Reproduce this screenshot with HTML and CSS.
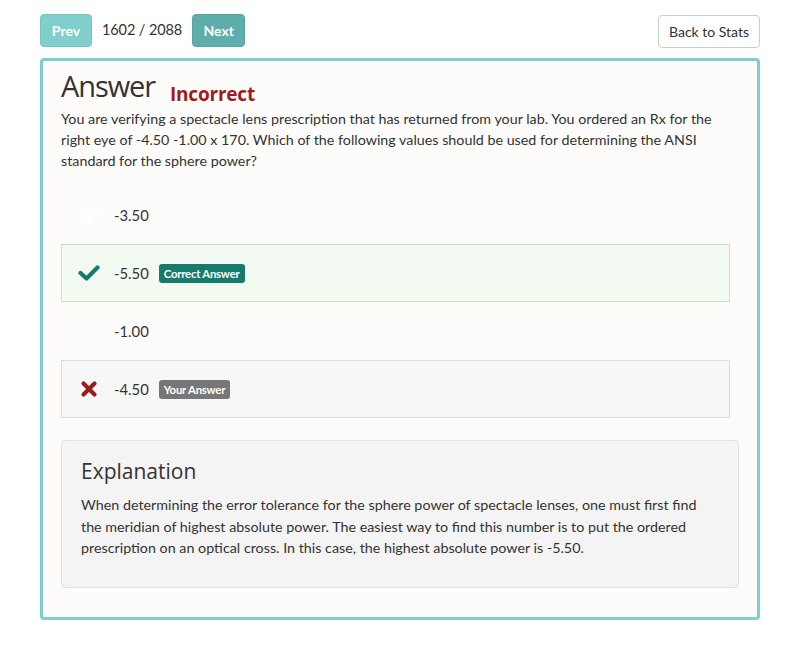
FILE: index.html
```html
<!DOCTYPE html>
<html>
<head>
<meta charset="utf-8">
<link rel="stylesheet" href="styles.css">
</head>
<body>
<div class="page">
  <div class="toolbar">
    <div class="nav">
      <button class="btn btn-prev">Prev</button>
      <span class="counter">1602 / 2088</span>
      <button class="btn btn-next">Next</button>
    </div>
    <button class="btn btn-back">Back to Stats</button>
  </div>
  <div class="card">
    <div class="title-row">
      <h1 class="title">Answer</h1>
      <span class="status">Incorrect</span>
    </div>
    <p class="question">You are verifying a spectacle lens prescription that has returned from your lab. You ordered an Rx for the right eye of -4.50 -1.00 x 170. Which of the following values should be used for determining the ANSI standard for the sphere power?</p>
    <div class="options">
      <div class="option">
        <span class="icon icon-hidden"><svg viewBox="0 0 22 18" width="22" height="18"><path d="M2.5 9 L8.5 14.5 L19.5 3.5" fill="none" stroke="#ffffff" stroke-width="4.2" stroke-linecap="round" stroke-linejoin="round"/></svg></span>
        <span class="value">-3.50</span>
      </div>
      <div class="option option-correct">
        <span class="icon"><svg viewBox="0 0 22 18" width="22" height="18"><path d="M2.5 9 L8.5 14.5 L19.5 3.5" fill="none" stroke="#167a6c" stroke-width="4.2" stroke-linecap="round" stroke-linejoin="round"/></svg></span>
        <span class="value">-5.50</span>
        <span class="badge badge-correct">Correct Answer</span>
      </div>
      <div class="option">
        <span class="icon"></span>
        <span class="value">-1.00</span>
      </div>
      <div class="option option-wrong">
        <span class="icon"><svg viewBox="0 0 18 18" width="18" height="18"><path d="M3.5 3.5 L14.5 14.5 M14.5 3.5 L3.5 14.5" fill="none" stroke="#9b1c1c" stroke-width="4.2" stroke-linecap="round"/></svg></span>
        <span class="value">-4.50</span>
        <span class="badge badge-yours">Your Answer</span>
      </div>
    </div>
    <div class="well">
      <h2 class="well-title">Explanation</h2>
      <p class="well-text">When determining the error tolerance for the sphere power of spectacle lenses, one must first find the meridian of highest absolute power. The easiest way to find this number is to put the ordered prescription on an optical cross. In this case, the highest absolute power is -5.50.</p>
    </div>
  </div>
</div>
</body>
</html>
```

FILE: styles.css
```css
* { box-sizing: border-box; }
html, body { margin: 0; padding: 0; background: #ffffff; }
body {
  font-family: Lato, "Open Sans", sans-serif;
  color: #333333;
  font-size: 14.3px;
}
.page {
  padding: 14px 40px 0 40px;
  width: 800px;
}
.toolbar {
  display: flex;
  justify-content: space-between;
  align-items: flex-start;
  height: 44px;
}
.nav {
  display: flex;
  align-items: center;
}
.btn {
  font-family: Lato, sans-serif;
  font-size: 14px;
  border-radius: 4px;
  height: 33px;
  padding: 0 12px;
  cursor: pointer;
}
.btn-prev {
  background: #80cfcd;
  border: 1px solid #74c4c2;
  color: #ffffff;
  font-weight: 700;
  width: 52px;
  padding: 0;
}
.btn-next {
  background: #5eaeab;
  border: 1px solid #55a4a1;
  color: #ffffff;
  font-weight: 700;
  width: 53px;
  padding: 0;
}
.counter {
  margin: 0 10px 0 10px;
  font-size: 14.5px;
  color: #333;
  position: relative;
  top: -1px;
  letter-spacing: -0.1px;
}
.btn-back {
  background: #ffffff;
  border: 1px solid #cccccc;
  color: #333333;
  width: 102px;
  padding: 0;
  height: 33px;
  margin-top: 1px;
}
.card {
  border: 3px solid #7dcfcf;
  border-radius: 4px;
  background: #fdfcfb;
  padding: 5px 18px 31px 18px;
  height: 562px;
}
.title-row {
  display: flex;
  align-items: baseline;
}
.title {
  font-family: "Open Sans", sans-serif;
  font-weight: 400;
  font-size: 29px;
  margin: 0;
  color: #333;
  letter-spacing: -1.1px;
  line-height: 40px;
}
.status {
  font-family: "Open Sans", sans-serif;
  font-weight: 700;
  color: #a11b1b;
  font-size: 19px;
  margin-left: 15px;
  position: relative;
  top: 4px;
  letter-spacing: -0.2px;
}
.question {
  margin: 2px 0 0 0;
  line-height: 21px;
  font-size: 14.3px;
  color: #333;
}
.options {
  margin-top: 15px;
  margin-right: 9px;
}
.option {
  display: flex;
  align-items: center;
  height: 58px;
  padding-left: 16px;
  border: 1px solid transparent;
}
.option-correct {
  background: #f3faf1;
  border-color: #c4e5bd;
}
.option-wrong {
  background: #f7f7f7;
  border-color: #dddddd;
}
.icon {
  width: 22px;
  height: 18px;
  display: inline-flex;
  align-items: center;
  justify-content: center;
  margin-right: 14px;
}
.value {
  font-size: 14.8px;
  color: #333;
}
.badge {
  margin-left: 10px;
  font-size: 11.3px;
  font-weight: 700;
  color: #fff;
  border-radius: 3px;
  padding: 3px 5px 3px 5px;
  letter-spacing: -0.2px;
  line-height: 13px;
}
.badge-correct { background: #167a6c; }
.badge-yours { background: #777777; }
.well {
  margin-top: 22px;
  background: #f4f4f4;
  border: 1px solid #e3e3e3;
  border-radius: 4px;
  padding: 16px 19px 28px 19px;
}
.well-title {
  margin: 0;
  font-family: "Open Sans", sans-serif;
  font-weight: 400;
  font-size: 21px;
  line-height: 28px;
  color: #333;
}
.well-text {
  margin: 9px 0 0 0;
  font-size: 14.3px;
  line-height: 21.5px;
  color: #333;
}
```
